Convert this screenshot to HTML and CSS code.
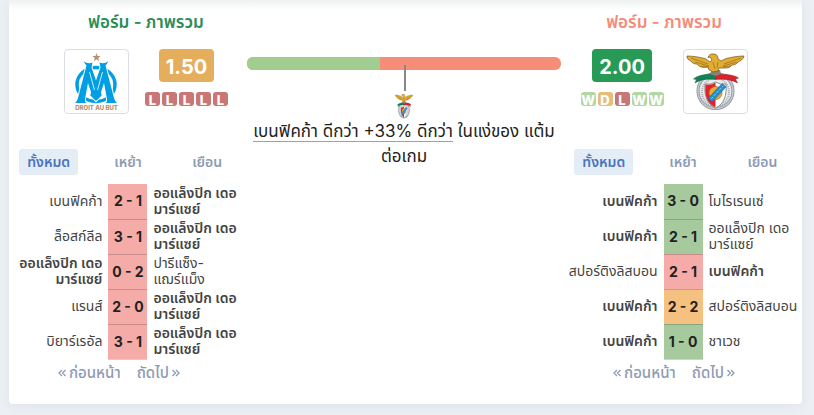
FILE: index.html
```html
<!DOCTYPE html>
<html lang="th">
<head>
    <meta charset="UTF-8">
    <meta name="viewport" content="width=device-width, initial-scale=1.0">
    <title>ฟอร์ม - ภาพรวม</title>
    <link rel="stylesheet" href="styles.css">
</head>
<body>
    <main class="card">
        <section class="team home">
            <div class="team-head">
                <h2>ฟอร์ม - ภาพรวม</h2>
                <div class="team-info">
                    <a href="#" class="logo">
                        <svg viewBox="0 0 63 63" aria-hidden="true">
                            <path fill="#b5916d" d="M31.500 3l1 3h3.200l-2.500 2 1 3.200-2.700-2-2.700 2 1-3.200-2.500-2h3.200z"/>
                            <ellipse cx="31" cy="34.500" rx="19" ry="17" fill="none" stroke="#009fe3" stroke-width="3.500"/>
                            <!-- legs and the centre of the M -->
                            <path fill="#009fe3" stroke="#fff" stroke-width="2" paint-order="stroke" d="M18.500 11q4 3.500 9 1.500l-1 5 4.500 13 4.500-13-1-5q5 2 9-1.500-1.500 3-3 4.500L49 48q.5 3 3 5H40.500q2-1 1.500-4l-3-16-3 9 .5 3 1-.5-6.500 6.500-6.500-6.500 1 .5.500-3-3-9-3 16q-.5 3 1.500 4H10q2.500-2 3-5l8.500-32.500q-1.500-1.500-3-4.500z"/>
                            <path fill="none" stroke="#fff" stroke-width=".8" d="M24.500 22l5 18M37.500 22l-5 18"/>
                            <text x="31.500" y="60" text-anchor="middle">DROIT AU BUT</text>
                        </svg>
                    </a>
                    <div class="rating">
                        <strong class="ppg mid">1.50</strong>
                        <div class="form">
                            <span class="l">L</span><span class="l">L</span><span class="l">L</span><span class="l">L</span><span class="l">L</span>
                        </div>
                    </div>
                </div>
            </div>
            <div class="tabs">
                <div><button type="button" class="active">ทั้งหมด</button></div>
                <div><button type="button">เหย้า</button></div>
                <div><button type="button">เยือน</button></div>
            </div>
            <table class="results">
                <tr><td>เบนฟิคก้า</td><td class="score loss">2 - 1</td><td><b>ออแล็งปิก เดอ มาร์แซย์</b></td></tr>
                <tr><td>ล็อสก์ลีล</td><td class="score loss">3 - 1</td><td><b>ออแล็งปิก เดอ มาร์แซย์</b></td></tr>
                <tr><td><b>ออแล็งปิก เดอ มาร์แซย์</b></td><td class="score loss">0 - 2</td><td>ปารีแซ็ง-<br>แฌร์แม็ง</td></tr>
                <tr><td>แรนส์</td><td class="score loss">2 - 0</td><td><b>ออแล็งปิก เดอ มาร์แซย์</b></td></tr>
                <tr><td>บิยาร์เรอัล</td><td class="score loss">3 - 1</td><td><b>ออแล็งปิก เดอ มาร์แซย์</b></td></tr>
            </table>
            <div class="pager">
                <button type="button"><svg viewBox="0 0 8 10" aria-hidden="true"><path d="M4 2L1 5l3 3M7.500 2l-3 3 3 3"/></svg>ก่อนหน้า</button>
                <button type="button">ถัดไป<svg viewBox="0 0 8 10" aria-hidden="true"><path d="M.5 2l3 3-3 3M4 2l3 3-3 3"/></svg></button>
            </div>
        </section>

        <section class="compare">
            <div class="bar">
                <div class="bar-home" style="width: 42.4%"></div>
                <div class="marker"></div>
            </div>
            <svg class="mini-logo" viewBox="2 4 59 57" preserveAspectRatio="none" aria-hidden="true"><use href="#benfica"/></svg>
            <p><span>เบนฟิคก้า ดีกว่า +33% ดีกว่า</span> ในแง่ของ แต้ม<br>ต่อเกม</p>
        </section>

        <section class="team away">
            <div class="team-head">
                <h2>ฟอร์ม - ภาพรวม</h2>
                <div class="team-info">
                    <div class="rating">
                        <strong class="ppg good">2.00</strong>
                        <div class="form">
                            <span class="w">W</span><span class="d">D</span><span class="l">L</span><span class="w">W</span><span class="w">W</span>
                        </div>
                    </div>
                    <a href="#" class="logo">
                        <svg viewBox="0 0 63 63" aria-hidden="true">
                            <g id="benfica">
                                <!-- wheel -->
                                <ellipse cx="31.500" cy="41" rx="17.500" ry="17.500" fill="#e9ebee" stroke="#8a9099" stroke-width="3"/>
                                <ellipse cx="31.500" cy="41" rx="17.500" ry="17.500" fill="none" stroke="#c3c8ce" stroke-width="1.500"/>
                                <ellipse cx="31.500" cy="42" rx="13.500" ry="14" fill="none" stroke="#a9afb6" stroke-width="2" stroke-dasharray="1 1"/>
                                <!-- shield -->
                                <path fill="#fff" stroke="#777" stroke-width=".8" d="M21 34q6 1 10.500-2 4.500 3 10.500 2c1 12-2 20-10.500 24C23 54 20 46 21 34z"/>
                                <path fill="#e2222b" d="M21.500 34.500q6 1 10-2V57.500C23 53.500 20.500 46 21.500 34.500z"/>
                                <circle cx="31.500" cy="43" r="6.500" fill="#e5ae32" stroke="#8f6b25" stroke-width=".7"/>
                                <path fill="#2590d0" stroke="#17649b" stroke-width=".6" d="M24.500 48L38 33.500l4 3.500-14 15z"/>
                                <path fill="none" stroke="#a5d2ed" stroke-width="1" stroke-dasharray="2 2" d="M27.500 48.500L39 36"/>
                                <!-- ribbon -->
                                <path fill="#0b8554" stroke="#28523c" stroke-width=".5" d="M31.500 24C22 24 14 25 9.500 29l3 .5-1.500 3.500c5-3.500 12-4.500 20.500-3.500z"/>
                                <path fill="#d8222d" stroke="#8d2027" stroke-width=".5" d="M31.500 24c9 0 18 .5 23 4l-3 1 2 4c-5-3-13-4.500-22-3.500z"/>
                                <!-- eagle -->
                                <path fill="#8b8175" d="M28 20h8l1 4-5 2-6-2z"/>
                                <path fill="#e2ad32" stroke="#71541c" stroke-width=".7" d="M3 6c5 0 13 1 19 3l4 3 2-2-2-3-2 .5c1-3 3-4 6-3.500 3 .5 4 2 4 5l3 2 4-2c6-2 14-3 19-3-1 4-4 5-6 6-1 2-4 3-6 3-2 3-5 3-7 3l-6 0-1 3-5 1-4-2-1-3c-5 1-9 0-11-3-3 0-5-1-6-3-2-1-4-2-4-4z"/>
                                <path fill="none" stroke="#926b20" stroke-width=".7" d="M7 8l17 6M11 12l14 4M17 16l8 1M57 8l-17 6M53 12l-14 4M47 16l-8 1M29 12l2 7M34 12l-1 6"/>
                            </g>
                        </svg>
                    </a>
                </div>
            </div>
            <div class="tabs">
                <div><button type="button" class="active">ทั้งหมด</button></div>
                <div><button type="button">เหย้า</button></div>
                <div><button type="button">เยือน</button></div>
            </div>
            <table class="results">
                <tr><td><b>เบนฟิคก้า</b></td><td class="score win">3 - 0</td><td>โมไรเรนเซ่</td></tr>
                <tr><td><b>เบนฟิคก้า</b></td><td class="score win">2 - 1</td><td>ออแล็งปิก เดอ มาร์แซย์</td></tr>
                <tr><td>สปอร์ติงลิสบอน</td><td class="score loss">2 - 1</td><td><b>เบนฟิคก้า</b></td></tr>
                <tr><td><b>เบนฟิคก้า</b></td><td class="score draw">2 - 2</td><td>สปอร์ติงลิสบอน</td></tr>
                <tr><td><b>เบนฟิคก้า</b></td><td class="score win">1 - 0</td><td>ชาเวช</td></tr>
            </table>
            <div class="pager">
                <button type="button"><svg viewBox="0 0 8 10" aria-hidden="true"><path d="M4 2L1 5l3 3M7.500 2l-3 3 3 3"/></svg>ก่อนหน้า</button>
                <button type="button">ถัดไป<svg viewBox="0 0 8 10" aria-hidden="true"><path d="M.5 2l3 3-3 3M4 2l3 3-3 3"/></svg></button>
            </div>
        </section>
    </main>
</body>
</html>
```

FILE: styles.css
```css
* {
    box-sizing: border-box;
}
body {
    margin: 0;
    background-color: #ecf0f4;
    font-family: Inter, "Noto Sans Thai", "Noto Sans", sans-serif;
    font-size: 14px;
    color: #444;
}
button {
    border: none;
    background: none;
    padding: 0;
    font: inherit;
    cursor: pointer;
}
.card {
    display: grid;
    grid-template-columns: 3fr 4fr 3fr;
    margin: 0 12px 11px 9px;
    padding-bottom: 18px;
    background: linear-gradient(#eff1f1, #fff 10px);
    border-radius: 0 0 4px 4px;
    box-shadow: 0 2px 12px rgba(60, 80, 120, 0.08);
}
.team {
    min-width: 0;
}
.team-head {
    display: flex;
    flex-direction: column;
    align-items: center;
}
.home .team-head {
    padding-left: 36px;
}
.away .team-head {
    padding-right: 38px;
}
h2 {
    margin: 10px 0 15px;
    font-size: 17px;
    line-height: 24px;
    font-weight: 600;
    color: #2c8c58;
}
.away h2 {
    color: #f58b78;
}
.team-info {
    display: flex;
    gap: 16px;
}
.away .team-info {
    gap: 19px;
}
.logo {
    width: 65px;
    height: 65px;
    border: 1px solid #dcdee6;
    border-radius: 4px;
}
.logo svg {
    display: block;
    width: 100%;
}
.logo text {
    font: 800 6px Inter, sans-serif;
    fill: #b5916d;
}
.rating {
    display: flex;
    flex-direction: column;
    align-items: center;
    gap: 10px;
}
.ppg {
    height: 33px;
    padding: 2px 7px 0;
    border-radius: 4px;
    font-size: 20px;
    line-height: 32px;
    font-weight: 700;
    color: #fff;
}
.mid {
    background-color: #e4ae5d;
}
.good {
    background-color: #279b55;
}
.form {
    display: flex;
    gap: 2px;
}
.form span {
    width: 15px;
    height: 14px;
    border-radius: 3px;
    font-size: 13px;
    line-height: 16px;
    font-weight: 800;
    text-align: center;
    color: #fff;
}
.form .l {
    background-color: #c97676;
}
.form .d {
    background-color: #e8bd7b;
}
.form .w {
    background-color: #b3d6a5;
}
.tabs {
    display: grid;
    grid-template-columns: 1fr 1fr 1fr;
    margin: 35px 0 9px;
    text-align: center;
}
.tabs button {
    display: block;
    margin: 0 auto;
    padding: 0 8px;
    border-radius: 3px;
    font-weight: 600;
    line-height: 26px;
    color: #8d9bb5;
}
.tabs .active {
    background-color: #e4ecf5;
    color: #4a73c0;
}
.results {
    width: 100%;
    table-layout: fixed;
    border-collapse: collapse;
    line-height: 16px;
}
.results td {
    height: 35px;
    padding: 0 2px 2px 6px;
}
.results td:first-child {
    padding: 0 6px 2px 2px;
    text-align: right;
}
.results b {
    font-weight: 600;
}
.results .score {
    width: 39px;
    padding: 0;
    border-bottom: 1px solid rgba(0, 0, 0, 0.18);
    font-weight: 700;
    text-align: center;
    white-space: nowrap;
    color: #222;
}
.loss {
    background-color: #f5aca9;
}
.win {
    background-color: #a6ca9e;
}
.draw {
    background-color: #f5c180;
}
.pager {
    display: flex;
    justify-content: center;
    gap: 16px;
    padding-right: 18px;
    line-height: 26px;
}
.pager button {
    display: flex;
    align-items: center;
    gap: 3px;
    font-size: 15px;
    font-weight: 500;
    color: #8d9bb5;
}
.pager svg {
    width: 8px;
    height: 10px;
    fill: none;
    stroke: currentColor;
    stroke-width: 1.3;
}
.compare {
    padding: 57px 3px 0 0;
    text-align: center;
}
.bar {
    position: relative;
    height: 13px;
    border-radius: 6px;
    background-color: #f58d78;
}
.bar-home {
    height: 100%;
    border-radius: 6px 0 0 6px;
    background-color: #a2cd90;
}
.marker {
    position: absolute;
    top: 8px;
    left: 50%;
    width: 2px;
    height: 26px;
    background-color: #888;
}
.mini-logo {
    display: block;
    width: 18px;
    height: 25px;
    margin: 24px auto 0;
}
.compare p {
    margin: 0;
    font-size: 17px;
    line-height: 25px;
    color: #222;
}
.compare span {
    border-bottom: 1px solid #7fc153;
}
```
